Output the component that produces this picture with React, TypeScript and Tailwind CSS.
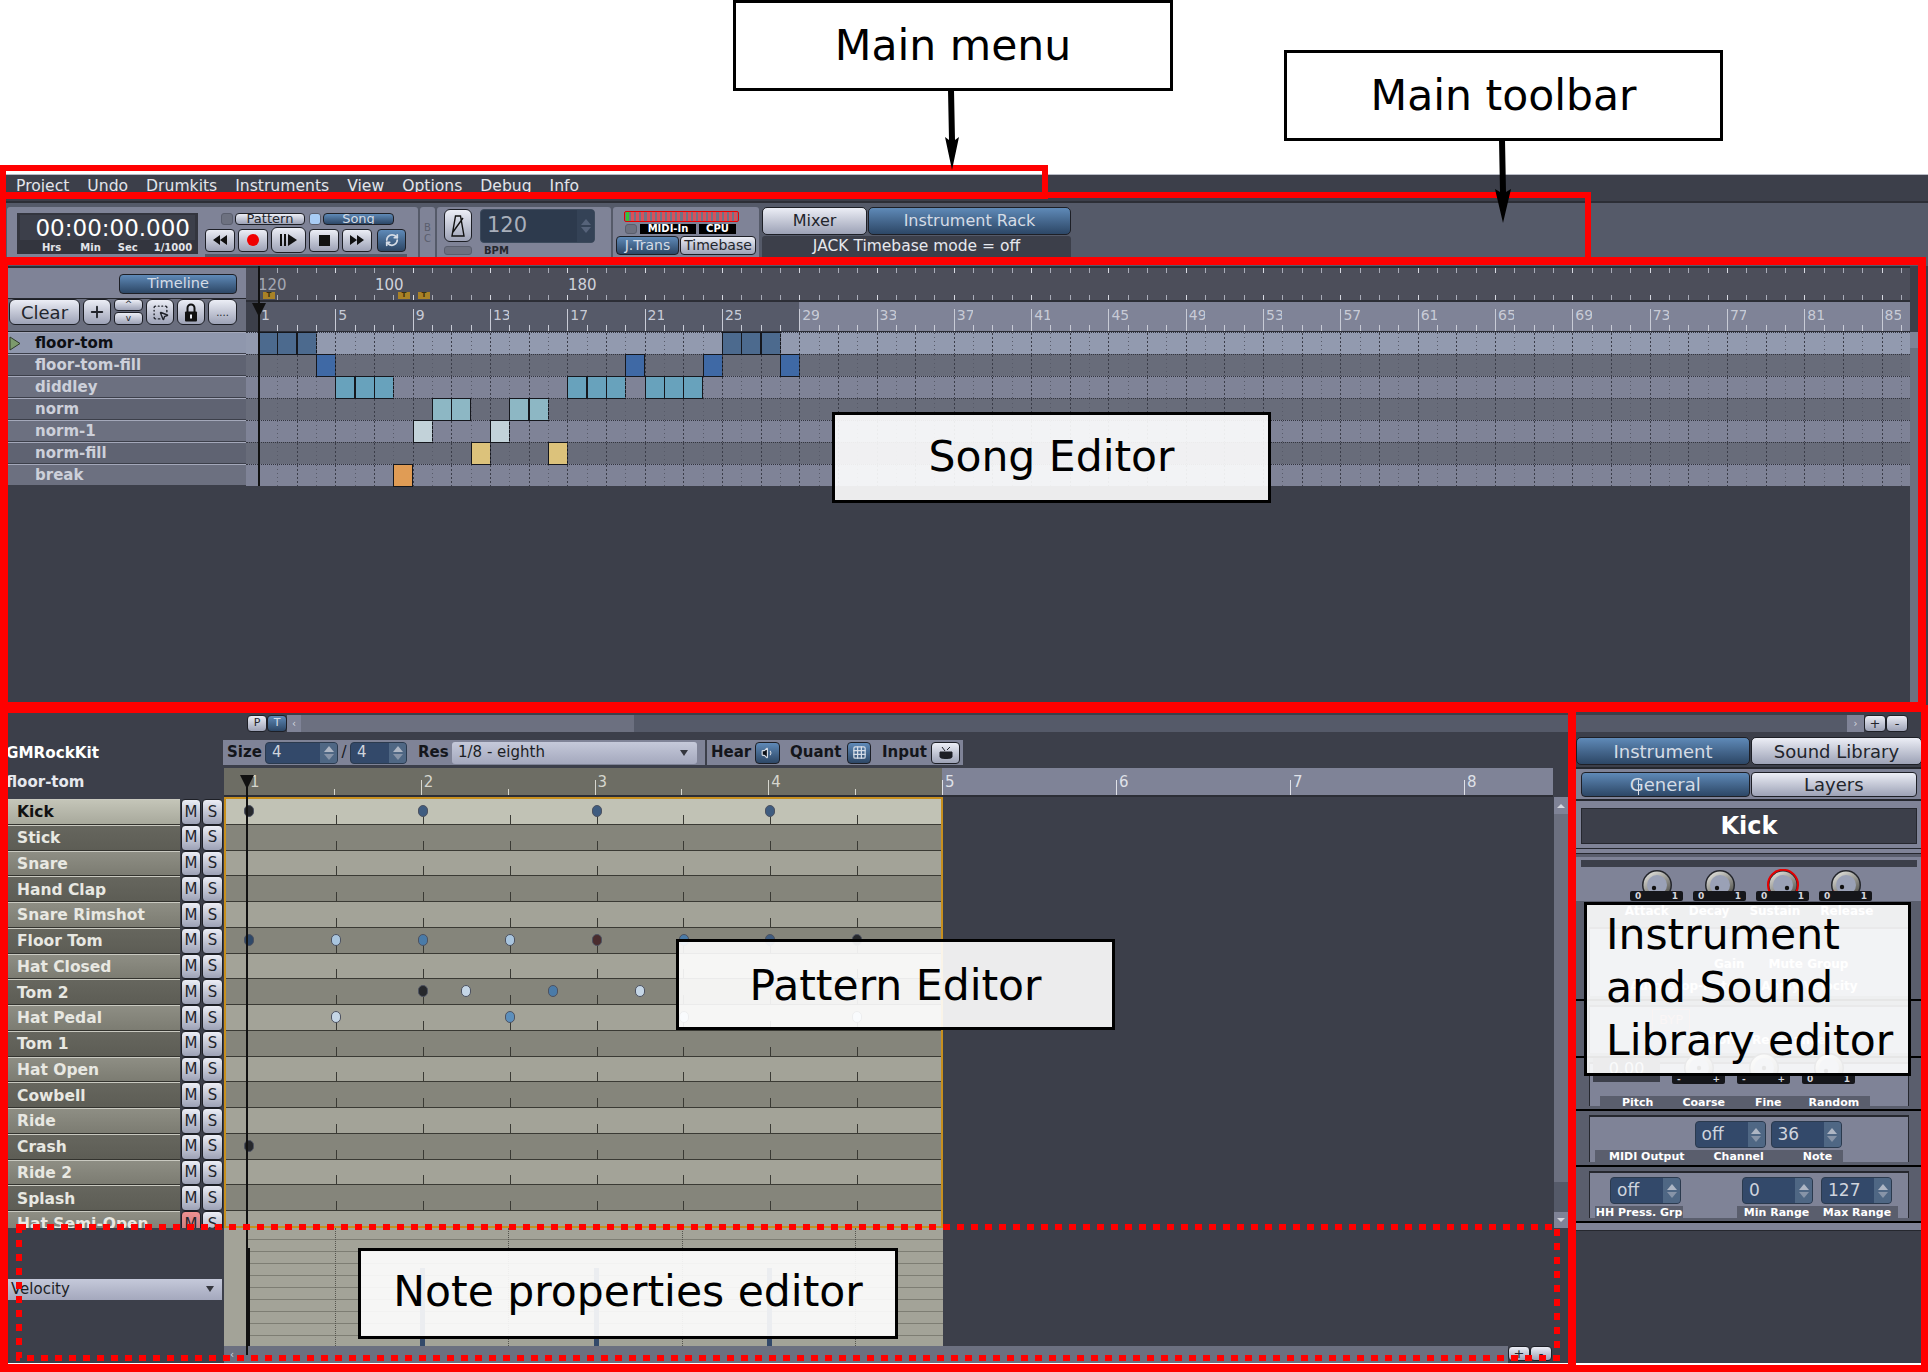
import { Grid3x3, Plus, RefreshCw, SquareDashedMousePointer, Volume1 } from "lucide-react";

const MENU = ["Project", "Undo", "Drumkits", "Instruments", "View", "Options", "Debug", "Info"];

const PATTERNS = ["floor-tom", "floor-tom-fill", "diddley", "norm", "norm-1", "norm-fill", "break"];

const SONG_CELLS: { cols: number[]; color: string }[] = [
  { cols: [0, 1, 2, 24, 25, 26], color: "bg-[#4c6a8e]" },
  { cols: [3, 19, 23, 27], color: "bg-[#3f69a5]" },
  { cols: [4, 5, 6, 16, 17, 18, 20, 21, 22], color: "bg-[#68a2bc]" },
  { cols: [9, 10, 13, 14], color: "bg-[#8db7c4]" },
  { cols: [8, 12], color: "bg-[#c2d2d9]" },
  { cols: [11, 15], color: "bg-[#dcc27b]" },
  { cols: [7], color: "bg-[#e09c55]" },
];

const INSTRUMENTS = [
  "Kick", "Stick", "Snare", "Hand Clap", "Snare Rimshot", "Floor Tom", "Hat Closed", "Tom 2", "Hat Pedal",
  "Tom 1", "Hat Open", "Cowbell", "Ride", "Crash", "Ride 2", "Splash", "Hat Semi-Open",
];

// note positions are px offsets from the left of the pattern grid
const NOTES: Record<string, { x: number; c: string }[]> = {
  Kick: [
    { x: 23, c: "bg-[#26282c]" },
    { x: 197, c: "bg-[#3f5c80]" },
    { x: 371, c: "bg-[#3f5c80]" },
    { x: 544, c: "bg-[#3f5c80]" },
  ],
  "Floor Tom": [
    { x: 23, c: "bg-[#2e4868]" },
    { x: 110, c: "bg-[#a9c5de]" },
    { x: 197, c: "bg-[#4a7ba8]" },
    { x: 284, c: "bg-[#a9c5de]" },
    { x: 371, c: "bg-[#4a2c2e]" },
    { x: 458, c: "bg-[#4a7ba8]" },
    { x: 544, c: "bg-[#3f5c80]" },
    { x: 631, c: "bg-[#26282c]" },
  ],
  "Tom 2": [
    { x: 197, c: "bg-[#26282c]" },
    { x: 240, c: "bg-[#c5d6e6]" },
    { x: 327, c: "bg-[#4a7ba8]" },
    { x: 414, c: "bg-[#c5d6e6]" },
  ],
  "Hat Pedal": [
    { x: 110, c: "bg-[#c5d6e6]" },
    { x: 284, c: "bg-[#5c8fbc]" },
    { x: 458, c: "bg-[#c5d6e6]" },
    { x: 631, c: "bg-[#c5d6e6]" },
  ],
  Crash: [{ x: 23, c: "bg-[#26282c]" }],
};

function SilverBtn({ className = "", children }: { className?: string; children?: React.ReactNode }) {
  return (
    <div
      className={`flex items-center justify-center overflow-hidden rounded-[4px] border border-[#1d1f26] bg-linear-to-b from-[#eceef6] to-[#9da2b6] text-[#22252c] ${className}`}
    >
      {children}
    </div>
  );
}

function BlueBtn({ className = "", children }: { className?: string; children?: React.ReactNode }) {
  return (
    <div
      className={`flex items-center justify-center overflow-hidden rounded-[4px] border border-[#1d1f26] bg-linear-to-b from-[#5f8ab8] to-[#2d4766] text-[#d5dce6] ${className}`}
    >
      {children}
    </div>
  );
}

function Led({ on = false, className = "" }: { on?: boolean; className?: string }) {
  return (
    <div
      className={`rounded-[3px] border border-[#5a5e6d] ${on ? "bg-[#a8ccf5]" : "bg-[#6d7180]"} ${className}`}
    />
  );
}

function Spin({ value, className = "", dark = false }: { value: string; className?: string; dark?: boolean }) {
  return (
    <div
      className={`flex items-stretch overflow-hidden rounded-[4px] border ${dark ? "border-[#3c4a5c] bg-[#2d3a4d]" : "border-[#2b3a4e] bg-[#33496a]"} ${className}`}
    >
      <div className={`flex flex-1 items-center pl-[6px] ${dark ? "text-[#a9afbb]" : "text-[#cfd4dd]"}`}>{value}</div>
      <div className={`flex w-[17px] flex-col items-center justify-center gap-[2px] ${dark ? "bg-[#344256]" : "bg-[#4f6784]"}`}>
        <div className={`h-0 w-0 border-x-[5px] border-b-[6px] border-x-transparent ${dark ? "border-b-[#56637a]" : "border-b-[#aeb6c4]"}`} />
        <div className={`h-0 w-0 border-x-[5px] border-t-[6px] border-x-transparent ${dark ? "border-t-[#56637a]" : "border-t-[#8794a8]"}`} />
      </div>
    </div>
  );
}

function Knob({
  arc,
  lo = "0",
  hi = "1",
  dot = { x: 13, y: 19 },
}: {
  arc?: "full" | "low";
  lo?: string;
  hi?: string;
  dot?: { x: number; y: number };
}) {
  return (
    <div className="relative flex h-[42px] w-[53px] flex-col items-center">
      <svg width="32" height="32" viewBox="0 0 32 32" className="relative">
        <defs>
          <linearGradient id="knobRim" x1="0" y1="0" x2="0.6" y2="1">
            <stop offset="0" stopColor="#efefea" />
            <stop offset="1" stopColor="#55554f" />
          </linearGradient>
        </defs>
        <circle cx="16" cy="16" r="15" fill="#23252b" />
        <circle cx="16" cy="16" r="13.5" fill="url(#knobRim)" />
        <circle cx="16" cy="16" r="10" fill="#9aa1b6" />
        <circle cx={dot.x} cy={dot.y} r="2.2" fill="#111" />
        {arc === "full" ? (
          <path d="M6 27 A15 15 0 1 1 26 27" fill="none" stroke="#e60000" strokeWidth="2" />
        ) : null}
        {arc === "low" ? <path d="M6 27 A15 15 0 0 1 3 22" fill="none" stroke="#e60000" strokeWidth="2.5" /> : null}
      </svg>
      <div className="absolute top-[22px] flex h-[10px] w-[53px] items-center justify-between rounded-[2px] bg-[#15161a] px-[5px] text-[9px] leading-none font-bold text-[#d5d7df]">
        <span>{lo}</span>
        <span>{hi}</span>
      </div>
    </div>
  );
}

function Panel({ className = "", children }: { className?: string; children: React.ReactNode }) {
  return (
    <div className={`border-b-2 border-black bg-[#5a5e6d] px-[13px] pt-[4px] pb-[3px] ${className}`}>
      <div className="relative h-full border-t-2 border-r border-l border-[#25272e] bg-[#7f8397]">{children}</div>
    </div>
  );
}

function Annotation({ className = "", children }: { className?: string; children: React.ReactNode }) {
  return (
    <div
      className={`absolute flex items-center justify-center border-[3px] border-black text-[42.5px] leading-[53px] text-black ${className}`}
    >
      {children}
    </div>
  );
}

function SongRuler() {
  return (
    <div className="flex h-[30px] w-full border-b border-[#2c2e36] pl-[12px]">
      {Array.from({ length: 87 }).map((_, i) => {
        const past = i >= 28;
        return (
          <div key={i} className={`relative h-full w-[19.33px] shrink-0 ${past ? "bg-[#7f8397]" : "bg-[#565a69]"}`}>
            {i % 4 === 0 ? (
              <>
                <div className="absolute top-[7px] bottom-0 left-0 w-px bg-[#c8cbd6]" />
                <span className="absolute top-[5px] left-[3px] text-[14px] leading-[16px] text-[#c8cbd6]">{i + 1}</span>
              </>
            ) : (
              <div className="absolute bottom-0 left-0 h-[6px] w-px bg-[#c8cbd6]" />
            )}
          </div>
        );
      })}
    </div>
  );
}

function TimelineRuler() {
  return (
    <div className="relative flex h-[36px] w-full flex-col justify-between border-y-2 border-[#2c2e36] bg-[#4c4e5a] pl-[12px]">
      {[0, 1].map((r) => (
        <div key={r} className={`flex ${r === 0 ? "h-[6px] items-start" : "h-[6px] items-end"}`}>
          {Array.from({ length: 86 }).map((_, i) => (
            <div key={i} className="w-[19.33px] shrink-0">
              <div className={`h-[5px] w-px ${i % 4 === 0 ? "bg-[#d8dae2]" : "bg-[#a9acb8]"}`} />
            </div>
          ))}
        </div>
      ))}
      <span className="absolute top-[8px] left-[12px] text-[15px] leading-[18px] text-[#a4a7b2]">120</span>
      <span className="absolute top-[8px] left-[129px] text-[15px] leading-[18px] text-[#d0d2da]">100</span>
      <span className="absolute top-[8px] left-[322px] text-[15px] leading-[18px] text-[#d0d2da]">180</span>
      {[17, 152, 172].map((x) => (
        <span
          key={x}
          style={{ left: x }}
          className="absolute top-[24px] h-[7px] w-[12px] bg-[#a98227] text-center text-[7px] leading-[7px] font-bold text-[#3a3010]"
        >
          T
        </span>
      ))}
    </div>
  );
}

function SongRow({ row }: { row: number }) {
  const selected = row === 0;
  const odd = row % 2 === 1;
  const bg = selected ? "bg-[#929aaf]" : odd ? "bg-[#686c7a]" : "bg-[#7f8397]";
  const cells = SONG_CELLS[row];
  return (
    <div className={`flex h-[22px] w-full items-stretch border-t border-dotted border-[#33353f] pl-[12px] ${bg}`}>
      {Array.from({ length: 86 }).map((_, i) => {
        const filled = cells.cols.includes(i);
        return (
          <div key={i} className="relative h-full w-[19.33px] shrink-0">
            <div
              className={`h-full w-px ${
                i % 2 === 0
                  ? "bg-[repeating-linear-gradient(to_bottom,#3a3c48_0,#3a3c48_2px,transparent_2px,transparent_4px)]"
                  : "bg-[repeating-linear-gradient(to_bottom,#575a68_0,#575a68_1px,transparent_1px,transparent_4px)]"
              }`}
            />
            {filled ? (
              <div className={`absolute -top-px left-0 h-[23px] w-[20px] border border-[#15171d] ${cells.color}`} />
            ) : null}
          </div>
        );
      })}
    </div>
  );
}

function PatternRow({ name, row }: { name: string; row: number }) {
  const bg = row === 0 ? "bg-[#c1c2b5]" : row % 2 === 1 ? "bg-[#85857b]" : "bg-[#a3a398]";
  return (
    <div className={`relative flex h-[25.75px] shrink-0 items-end border-b border-[#3a3a34] pl-[23px] ${bg}`}>
      {Array.from({ length: 8 }).map((_, i) => (
        <div key={i} className="h-[9px] w-[86.9px] shrink-0 border-l border-[#3a3a34] first:border-l-0" />
      ))}
      {(NOTES[name] ?? []).map((n) => (
        <div
          key={n.x}
          style={{ left: n.x - 5 }}
          className={`absolute top-[6px] h-[12px] w-[10px] rounded-full border border-[#4d5260] ${n.c}`}
        />
      ))}
    </div>
  );
}

function InstrumentLabel({ name, row }: { name: string; row: number }) {
  const bg =
    row === 0
      ? "from-[#c4c5b8] to-[#a8a99c] text-[#111]"
      : row % 2 === 1
        ? "from-[#66665e] to-[#5d5d55] text-[#e8e8e2]"
        : "from-[#8e8e84] to-[#7c7c72] text-[#e8e8e2]";
  const muted = name === "Hat Semi-Open";
  return (
    <div className="flex h-[25.75px] shrink-0 items-stretch gap-px">
      <div
        className={`flex w-[172px] items-center overflow-hidden border-t border-[#c9c9c0] border-b border-b-[#33332e] bg-linear-to-b pt-[2px] pl-[9px] text-[15.5px] font-bold ${bg}`}
      >
        {name}
      </div>
      <SilverBtn className={`w-[20px] text-[15px] ${muted ? "from-[#f09090] to-[#b57a82]" : ""}`}>M</SilverBtn>
      <SilverBtn className="w-[21px] text-[15px]">S</SilverBtn>
    </div>
  );
}

function PatternRuler() {
  return (
    <div className="flex h-[29px] flex-1">
      <div className="flex w-[718px] border-b-2 border-[#2c2e36] bg-[#6d6d64] pl-[23px]">
        {Array.from({ length: 8 }).map((_, i) => (
          <div key={i} className="relative h-full w-[86.9px] shrink-0">
            {i % 2 === 0 ? (
              <>
                <div className="absolute top-[12px] bottom-0 left-0 w-px bg-[#d6d6ce]" />
                <span className="absolute top-[5px] left-[3px] text-[15px] leading-[18px] text-[#d6d6ce]">{i / 2 + 1}</span>
              </>
            ) : (
              <div className="absolute bottom-0 left-0 h-[6px] w-px bg-[#d6d6ce]" />
            )}
          </div>
        ))}
      </div>
      <div className="flex w-[611px] border-b-2 border-[#2c2e36] bg-[#7f8397]">
        {Array.from({ length: 7 }).map((_, i) => (
          <div key={i} className="relative h-full w-[87px] shrink-0">
            {i % 2 === 0 ? (
              <>
                <div className="absolute top-[12px] bottom-0 left-0 w-px bg-[#dfe1e8]" />
                <span className="absolute top-[5px] left-[3px] text-[15px] leading-[18px] text-[#dfe1e8]">
                  {Math.floor(i / 2) + 5}
                </span>
              </>
            ) : null}
          </div>
        ))}
        <div className="relative h-full flex-1">
          <div className="absolute top-[12px] bottom-0 left-[87px] w-px bg-[#dfe1e8]" />
        </div>
      </div>
    </div>
  );
}

function Toolbar() {
  return (
    <div className="flex h-[65px] items-start gap-[2px] border-t-2 border-[#2c2e36] bg-[#555a69] pt-[4px] pl-[7px] text-[#22252c]">
      {/* time + transport */}
      <div className="flex h-[51px] w-[411px] rounded-t-[3px] bg-[#7f8397] pt-[6px] pl-[10px]">
        <div className="flex h-[41px] w-[181px] flex-col bg-[#33353e] px-[3px] pt-[2px]">
          <div className="h-[25px] bg-[#3c3f4a] pr-[5px] text-right text-[23px] leading-[26px] text-white">00:00:00.000</div>
          <div className="flex h-[14px] items-center text-[10px] font-bold text-[#e3e5ea]">
            <span className="ml-[22px]">Hrs</span>
            <span className="ml-[19px]">Min</span>
            <span className="ml-[17px]">Sec</span>
            <span className="ml-[16px]">1/1000</span>
          </div>
        </div>
        <div className="ml-[7px] flex w-[202px] flex-col">
          <div className="flex h-[12px] items-center gap-[2px] pl-[16px]">
            <Led className="h-[12px] w-[12px]" />
            <SilverBtn className="h-[12px] w-[70px] rounded-[2px] text-[13px]">Pattern</SilverBtn>
            <Led on className="ml-[2px] h-[12px] w-[12px]" />
            <BlueBtn className="h-[12px] w-[71px] rounded-[2px] text-[13px]">Song</BlueBtn>
          </div>
          <div className="mt-[2px] flex h-[26px] items-center gap-[3px]">
            <SilverBtn className="h-[23px] w-[30px]">
              <svg width="16" height="10" viewBox="0 0 16 10"><path d="M8 0v10L1 5zM15 0v10L8 5z" fill="#111" /></svg>
            </SilverBtn>
            <SilverBtn className="h-[23px] w-[30px]">
              <div className="h-[12px] w-[12px] rounded-full bg-[#f00000]" />
            </SilverBtn>
            <SilverBtn className="h-[26px] w-[35px] rounded-[6px]">
              <svg width="20" height="12" viewBox="0 0 20 12"><path d="M1 0h2v12H1zM5 0h2v12H5zM9 0l9 6-9 6z" fill="#111" /></svg>
            </SilverBtn>
            <SilverBtn className="h-[23px] w-[30px]">
              <div className="h-[11px] w-[11px] bg-[#111]" />
            </SilverBtn>
            <SilverBtn className="h-[23px] w-[30px]">
              <svg width="16" height="10" viewBox="0 0 16 10"><path d="M1 0v10l7-5zM8 0v10l7-5z" fill="#111" /></svg>
            </SilverBtn>
            <BlueBtn className="ml-[2px] h-[23px] w-[29px] text-[#10141a]">
              <RefreshCw size={14} strokeWidth={3} />
            </BlueBtn>
          </div>
          <div className="mt-[1px] h-[6px] bg-[#555a69]" />
        </div>
      </div>
      {/* beat counter handle */}
      <div className="flex h-[51px] w-[15px] flex-col items-center justify-center rounded-t-[3px] bg-[#7f8397] text-[10px] leading-[11px] text-[#5a5e6d]">
        <span>B</span>
        <span>C</span>
      </div>
      {/* bpm */}
      <div className="flex h-[51px] w-[174px] rounded-t-[3px] bg-[#7f8397] pt-[2px] pl-[7px]">
        <div className="flex w-[28px] flex-col gap-[4px]">
          <SilverBtn className="h-[33px] rounded-[6px]">
            <svg width="16" height="24" viewBox="0 0 16 24" fill="none" stroke="#111" strokeWidth="1.4">
              <path d="M5.5 2h5L14 22H2zM3 18L13 4" />
            </svg>
          </SilverBtn>
          <Led className="h-[9px]" />
        </div>
        <div className="ml-[8px] flex flex-col">
          <Spin dark value="120" className="h-[34px] w-[115px] text-[21px]" />
          <div className="mt-[2px] ml-[4px] text-[10px] leading-[12px] font-bold text-[#25272e]">BPM</div>
        </div>
      </div>
      {/* meters */}
      <div className="flex h-[51px] w-[146px] flex-col rounded-t-[3px] bg-[#7f8397] pt-[4px] pl-[3px]">
        <div className="ml-[8px] flex h-[11px] w-[115px] items-center justify-between rounded-[2px] border border-[#e60000] bg-[#6f7386] px-px">
          {Array.from({ length: 22 }).map((_, i) => (
            <div key={i} className={`h-full w-[3px] ${i === 0 ? "bg-[#35c435]" : "bg-[#d8505a]"}`} />
          ))}
        </div>
        <div className="mt-[2px] ml-[9px] flex h-[10px] items-center gap-[3px] text-[10px] font-bold text-white">
          <Led className="h-[10px] w-[12px]" />
          <div className="flex h-[10px] w-[56px] items-center justify-center bg-black leading-none">MIDI-In</div>
          <div className="flex h-[10px] w-[37px] items-center justify-center bg-black leading-none">CPU</div>
        </div>
        <div className="mt-[2px] flex h-[19px] gap-px text-[14px]">
          <BlueBtn className="w-[63px]">J.Trans</BlueBtn>
          <SilverBtn className="w-[76px]">Timebase</SilverBtn>
        </div>
      </div>
      {/* mixer + rack */}
      <div className="ml-[1px] flex w-[309px] flex-col gap-[1px]">
        <div className="flex h-[28px] gap-[1px] text-[16px]">
          <SilverBtn className="w-[105px] rounded-[5px]">Mixer</SilverBtn>
          <BlueBtn className="flex-1 rounded-[5px]">Instrument Rack</BlueBtn>
        </div>
        <div className="flex h-[22px] items-center justify-center rounded-t-[3px] bg-[#3c3f4a] text-[15.5px] text-[#e6e8ee]">
          JACK Timebase mode = off
        </div>
      </div>
    </div>
  );
}

function SongEditor() {
  return (
    <div className="flex h-[441px] bg-[#3c3f4a]">
      <div className="w-[246px] shrink-0">
        <div className="flex h-[32px] justify-end border-t-2 border-[#2c2e36] bg-[#7f8397] pt-[6px] pr-[9px]">
          <BlueBtn className="h-[20px] w-[118px] text-[14.5px]">Timeline</BlueBtn>
        </div>
        <div className="flex h-[34px] items-start gap-[3px] border-y border-[#25272e] bg-[#6a6e7e] pl-[9px]">
          <SilverBtn className="h-[26px] w-[71px] rounded-[6px] text-[18px]">Clear</SilverBtn>
          <SilverBtn className="h-[26px] w-[28px] rounded-[6px]">
            <Plus size={18} strokeWidth={2.5} />
          </SilverBtn>
          <div className="flex h-[26px] w-[29px] flex-col gap-[1px]">
            <SilverBtn className="h-[12px] rounded-[2px] text-[9px]">^</SilverBtn>
            <SilverBtn className="h-[13px] rounded-[2px] text-[9px]">v</SilverBtn>
          </div>
          <SilverBtn className="h-[26px] w-[28px] rounded-[6px]">
            <SquareDashedMousePointer size={17} />
          </SilverBtn>
          <SilverBtn className="h-[26px] w-[28px] rounded-[6px]">
            <svg width="14" height="19" viewBox="0 0 14 19">
              <path d="M3.5 9V5a3.5 3.5 0 0 1 7 0v4" fill="none" stroke="#111" strokeWidth="2" />
              <rect x="1" y="8.5" width="12" height="10" rx="1" fill="#111" />
              <rect x="6" y="11.5" width="2" height="4" fill="#eceef6" />
            </svg>
          </SilverBtn>
          <SilverBtn className="h-[26px] w-[29px] rounded-[6px] from-[#a4a8ba] to-[#8a8ea2] text-[10px] text-[#6a6e7e]">
            ....
          </SilverBtn>
        </div>
        {PATTERNS.map((name, i) => (
          <div
            key={name}
            className={`relative flex h-[22px] items-center border-t border-b border-t-[#a4a8ba] border-b-[#3c3f4a] pl-[35px] text-[15px] font-bold ${
              i === 0 ? "bg-[#8f97ad] text-[#0d0f14]" : i % 2 === 1 ? "bg-[#5f6372] text-[#cdd0da]" : "bg-[#6c7080] text-[#cdd0da]"
            }`}
          >
            {i === 0 ? (
              <svg className="absolute top-[3px] left-[9px]" width="12" height="15" viewBox="0 0 12 15">
                <path d="M1 1l10 6.5L1 14z" fill="#7c9a6c" stroke="#2f3a2a" />
              </svg>
            ) : null}
            {name}
          </div>
        ))}
      </div>
      <div className="relative w-[1664px] shrink-0 overflow-hidden">
        <TimelineRuler />
        <SongRuler />
        {PATTERNS.map((name, i) => (
          <SongRow key={name} row={i} />
        ))}
        {/* playhead */}
        <div className="absolute top-0 left-[12px] h-[220px] w-[2px] bg-[#111]" />
        <div className="absolute top-[37px] left-[6px] h-0 w-0 border-x-[7px] border-t-[14px] border-x-transparent border-t-[#111]" />
      </div>
      <div className="mt-[66px] flex h-[370px] w-[8px] shrink-0 flex-col bg-[#6c7080]">
        <div className="h-[16px] bg-[#7f8397]" />
      </div>
    </div>
  );
}

function PatternHeader() {
  return (
    <div className="flex h-[35px] items-end bg-[#3c3f4a] pb-[3px] text-[15px]">
      <div className="w-[223px] self-center pt-[8px] pl-[6px] text-[15.2px] font-bold text-white">GMRockKit</div>
      <div className="flex h-[25px] w-[482px] items-center bg-[#7f8397] pl-[4px] text-[#14161b]">
        <span className="w-[38px] font-bold">Size</span>
        <Spin value="4" className="h-[22px] w-[73px] text-[#d5dce6]" />
        <span className="w-[12px] text-center">/</span>
        <Spin value="4" className="h-[22px] w-[57px]" />
        <span className="ml-[11px] w-[34px] font-bold">Res</span>
        <div className="flex h-[22px] w-[245px] items-center justify-between rounded-[3px] bg-linear-to-b from-[#c5c9da] to-[#a4a8bd] px-[6px] text-[#1c1e24]">
          <span>1/8 - eighth</span>
          <div className="mr-[3px] h-0 w-0 border-x-[4px] border-t-[6px] border-x-transparent border-t-[#34363e]" />
        </div>
      </div>
      <div className="ml-[2px] flex h-[25px] w-[256px] items-center bg-[#7f8397] pl-[4px] font-bold text-[#14161b]">
        <span className="w-[44px]">Hear</span>
        <BlueBtn className="h-[22px] w-[25px] text-[#0d1118]">
          <Volume1 size={14} fill="#0d1118" />
        </BlueBtn>
        <span className="ml-[10px] w-[57px]">Quant</span>
        <BlueBtn className="h-[22px] w-[24px] text-[#0d1118]">
          <Grid3x3 size={15} />
        </BlueBtn>
        <span className="ml-[11px] w-[49px]">Input</span>
        <SilverBtn className="h-[22px] w-[29px]">
          <svg width="14" height="14" viewBox="0 0 14 14" fill="#1d1f26">
            <path d="M1 6h12v5c0 2-12 2-12 0zM3 1l3 4M11 1L8 4" stroke="#1d1f26" />
          </svg>
        </SilverBtn>
      </div>
    </div>
  );
}

function PatternEditor() {
  return (
    <div className="w-[1570px] shrink-0">
      <PatternHeader />
      <div className="flex">
        <div className="w-[224px] shrink-0 pt-[3px] pl-[6px] text-[15px] font-bold text-[#e6e8ee]">floor-tom</div>
        <PatternRuler />
      </div>
      <div className="flex h-[431px] overflow-hidden">
        <div className="flex w-[224px] shrink-0 flex-col overflow-hidden pt-[2px] pl-[8px]">
          {INSTRUMENTS.map((name, i) => (
            <InstrumentLabel key={name} name={name} row={i} />
          ))}
        </div>
        <div className="flex w-[719px] shrink-0 flex-col overflow-hidden border-2 border-[#c8901e]">
          {INSTRUMENTS.map((name, i) => (
            <PatternRow key={name} name={name} row={i} />
          ))}
        </div>
        <div className="w-[611px] shrink-0" />
        <div className="flex w-[14px] shrink-0 flex-col bg-[#6c7080]">
          <div className="flex h-[17px] items-center justify-center bg-[#7f8397]">
            <div className="h-0 w-0 border-x-[4px] border-b-[4px] border-x-transparent border-b-[#d5d7df]" />
          </div>
          <div className="flex-1" />
          <div className="h-[30px] bg-[#555a69]" />
          <div className="flex h-[16px] items-center justify-center bg-[#7f8397]">
            <div className="h-0 w-0 border-x-[4px] border-t-[4px] border-x-transparent border-t-[#d5d7df]" />
          </div>
        </div>
      </div>
      <div className="flex h-[118px]">
        <div className="flex w-[224px] shrink-0 items-center pt-[4px] pl-[8px]">
          <div className="flex h-[21px] w-[214px] items-center justify-between bg-linear-to-b from-[#c5c9da] to-[#a4a8bd] pl-[3px] pr-[8px] text-[15px] text-[#1c1e24]">
            <span>Velocity</span>
            <div className="h-0 w-0 border-x-[4px] border-t-[6px] border-x-transparent border-t-[#34363e]" />
          </div>
        </div>
        <div className="relative w-[719px] shrink-0 bg-[#a3a398] pl-[23px]">
          <div className="h-full bg-[repeating-linear-gradient(to_bottom,#a3a398_0,#a3a398_11px,#7d7d73_11px,#7d7d73_12px)]" />
          {[111, 284, 458, 631].map((x) => (
            <div key={x} style={{ left: x }} className="absolute top-0 bottom-0 w-px border-l border-dotted border-[#55554e]" />
          ))}
          <div className="absolute top-[20px] bottom-0 left-[22px] w-[4px] bg-[#111]" />
          <div className="absolute top-[40px] bottom-0 left-[196px] w-[5px] bg-[#33496a]" />
          <div className="absolute top-[40px] bottom-0 left-[370px] w-[5px] bg-[#33496a]" />
          <div className="absolute top-[40px] bottom-0 left-[543px] w-[5px] bg-[#33496a]" />
        </div>
      </div>
      <div className="flex h-[17px] pl-[224px]">
        <div className="flex w-[16px] items-center justify-center bg-[#6c7080] text-[10px] text-[#d5d7df]">‹</div>
        <div className="flex-1 bg-[#6c7080]" />
        <SilverBtn className="h-[15px] w-[22px] rounded-[2px] text-[13px]">+</SilverBtn>
        <SilverBtn className="mr-[18px] h-[15px] w-[22px] rounded-[2px] text-[13px]">-</SilverBtn>
      </div>
    </div>
  );
}

function RightPanel() {
  return (
    <div className="ml-[6px] flex w-[346px] shrink-0 flex-col pt-[4px] text-[18px]">
      <div className="flex h-[28px] gap-[1px]">
        <BlueBtn className="w-[174px] rounded-[5px]">Instrument</BlueBtn>
        <SilverBtn className="w-[171px] rounded-[5px]">Sound Library</SilverBtn>
      </div>
      <div className="mt-[2px] flex h-[32px] gap-[1px] border-t-2 border-[#25272e] bg-[#7f8397] px-[5px] pt-[3px]">
        <BlueBtn className="h-[25px] w-[169px] rounded-[4px]">General</BlueBtn>
        <SilverBtn className="h-[25px] w-[167px] rounded-[4px]">Layers</SilverBtn>
      </div>
      <div className="h-[49px] border-t-2 border-[#25272e] bg-[#7f8397] px-[5px] pt-[7px]">
        <div className="flex h-[36px] items-center justify-center border border-[#25272e] bg-[#3c3f4a] text-[24px] font-bold text-white">
          Kick
        </div>
      </div>
      <div className="h-[6px] border-y border-[#25272e] bg-[#7f8397]" />
      <div className="h-[69px] bg-[#5a5e6d] pt-[3px]">
        <div className="h-[44px] bg-[#7f8397] px-[5px] pt-[3px]">
          <div className="h-[7px] bg-[#3c3f4a]" />
          <div className="mt-[2px] flex justify-center gap-[10px] pl-[4px]">
            <Knob />
            <Knob />
            <Knob arc="full" dot={{ x: 20, y: 19 }} />
            <Knob arc="low" dot={{ x: 12, y: 18 }} />
          </div>
        </div>
        <div className="mt-[3px] flex justify-center gap-[20px] text-[12px] leading-[14px] font-bold text-white">
          <span>Attack</span>
          <span>Decay</span>
          <span>Sustain</span>
          <span>Release</span>
        </div>
      </div>
      <Panel className="h-[78px]">
        <div className="flex gap-[24px] pt-[28px] pl-[124px] text-[12px] leading-[14px] font-bold text-white">
          <span>Gain</span>
          <span>Mute Group</span>
        </div>
        <div className="mt-[8px] flex gap-[26px] pl-[40px] text-[12px] leading-[14px] font-bold text-white">
          <span>Auto-Stop-Note</span>
          <span>Apply Velocity</span>
        </div>
      </Panel>
      <Panel className="h-[57px]">
        <div className="flex items-center gap-[12px] pt-[2px] pl-[62px] text-[13px] text-[#c9a0a0]">
          <span className="border border-[#b88] px-[6px]">BYP</span>
        </div>
        <div className="absolute top-[26px] left-[105px] flex gap-[16px] text-[12px] leading-[14px] font-bold text-white">
          <span>Cutoff</span>
          <span>Resonance</span>
        </div>
      </Panel>
      <Panel className="h-[53px]">
        <div className="flex items-start pl-[3px]">
          <div className="mt-[-6px] h-[24px] w-[67px] bg-[#3c3f4a] text-center text-[16px] leading-[22px] text-[#cfd4dd]">0.00</div>
          <div className="ml-[12px] mt-[-12px] flex gap-[12px]">
            <Knob lo="-" hi="+" dot={{ x: 16, y: 16 }} />
            <Knob lo="-" hi="+" dot={{ x: 16, y: 16 }} />
            <Knob />
          </div>
        </div>
        <div className="absolute top-[32px] left-[10px] flex h-[12px] w-[270px] items-center bg-[#5a5e6d] text-[11px] leading-none font-bold text-white">
          <span className="ml-[22px]">Pitch</span>
          <span className="ml-[29px]">Coarse</span>
          <span className="ml-[30px]">Fine</span>
          <span className="ml-[27px]">Random</span>
        </div>
      </Panel>
      <Panel className="h-[56px]">
        <div className="flex justify-center gap-[5px] pt-[4px] pl-[38px] text-[17px]">
          <Spin value="off" className="h-[27px] w-[71px]" />
          <Spin value="36" className="h-[27px] w-[71px]" />
        </div>
        <div className="mt-[2px] ml-[5px] flex h-[12px] w-[248px] items-center bg-[#5a5e6d] text-[11px] leading-none font-bold text-white">
          <span className="ml-[14px]">MIDI Output</span>
          <span className="ml-[29px]">Channel</span>
          <span className="ml-[39px]">Note</span>
        </div>
      </Panel>
      <Panel className="h-[56px]">
        <div className="flex pt-[4px] pl-[20px] text-[17px]">
          <Spin value="off" className="h-[27px] w-[71px]" />
          <Spin value="0" className="ml-[61px] h-[27px] w-[71px]" />
          <Spin value="127" className="ml-[8px] h-[27px] w-[71px]" />
        </div>
        <div className="mt-[2px] flex pl-[5px] text-[11px] leading-none font-bold text-white">
          <div className="flex h-[12px] w-[88px] items-center justify-center bg-[#5a5e6d]">HH Press. Grp</div>
          <div className="ml-[54px] flex h-[12px] w-[161px] items-center justify-around bg-[#5a5e6d]">
            <span>Min Range</span>
            <span>Max Range</span>
          </div>
        </div>
      </Panel>
      <div className="h-[8px] border-b border-[#25272e] bg-[#7f8397]" />
    </div>
  );
}

export default function App() {
  return (
    <div className="relative h-[1372px] w-[1928px] overflow-hidden bg-white font-['DejaVu_Sans','Liberation_Sans',sans-serif]">
      <div className="h-[174px]" />
      <div className="flex h-[27px] items-center gap-[18px] border-t border-[#b9bcc6] bg-[#3c3f4a] pb-[3px] pl-[16px] text-[15.6px] text-[#e3e5ea]">
        {MENU.map((m) => (
          <span key={m}>{m}</span>
        ))}
      </div>
      <Toolbar />
      <SongEditor />

      {/* lower half */}
      <div className="bg-[#3c3f4a]">
        <div className="flex h-[26px] bg-[#3c3f4a] pt-[8px] pl-[247px]">
          <SilverBtn className="h-[17px] w-[20px] rounded-[3px] text-[11px]">P</SilverBtn>
          <BlueBtn className="h-[17px] w-[20px] rounded-[3px] text-[11px]">T</BlueBtn>
          <div className="flex h-[17px] w-[14px] items-center justify-center bg-[#7f8397] text-[10px] text-[#d5d7df]">‹</div>
          <div className="h-[17px] w-[333px] bg-[#6c7080]" />
          <div className="h-[17px] w-[1213px] bg-[#555a69]" />
          <div className="flex h-[17px] w-[17px] items-center justify-center bg-[#7f8397] text-[10px] text-[#d5d7df]">›</div>
          <SilverBtn className="h-[17px] w-[22px] rounded-[3px] text-[13px]">+</SilverBtn>
          <SilverBtn className="h-[17px] w-[22px] rounded-[3px] text-[13px]">-</SilverBtn>
        </div>
        <div className="relative flex">
          <PatternEditor />
          <RightPanel />
          {/* playhead */}
          <div className="absolute top-[42px] left-[246px] h-[580px] w-[2px] bg-[#111]" />
          <div className="absolute top-[42px] left-[240px] h-0 w-0 border-x-[7px] border-t-[14px] border-x-transparent border-t-[#111]" />
        </div>
      </div>

      {/* annotations drawn on top of the screenshot */}
      <div className="absolute top-[165px] left-0 h-[34px] w-[1048px] border-[6px] border-[#ff0000]" />
      <div className="absolute top-[192px] left-0 h-[72px] w-[1591px] border-[6px] border-[#ff0000]" />
      <div className="absolute top-[257px] left-0 h-[453px] w-[1926px] border-[8px] border-[#ff0000]" />
      <div className="absolute top-[705px] left-0 h-[667px] w-[1576px] border-[8px] border-[#ff0000]" />
      <div className="absolute top-[705px] left-[1569px] h-[667px] w-[359px] border-[7px] border-[#ff0000]" />

      <svg className="absolute top-[1224px] left-[16px]" width="1544" height="140">
        <rect x="3" y="3" width="1538" height="131" fill="none" stroke="#ff0000" strokeWidth="6" strokeDasharray="7 7" />
      </svg>

      <svg className="absolute top-0 left-0" width="1928" height="240">
        <path d="M948 90h6l1 50 4-3-7 33-7-33 4 3z" fill="#000" />
        <path d="M1499 140h6l1 52 5-3-8 34-8-34 5 3z" fill="#000" />
      </svg>

      <Annotation className="top-0 left-[733px] h-[91px] w-[440px] bg-white">Main menu</Annotation>
      <Annotation className="top-[50px] left-[1284px] h-[91px] w-[439px] bg-white">Main toolbar</Annotation>
      <Annotation className="top-[412px] left-[832px] h-[91px] w-[439px] bg-white/90 pb-[3px]">Song Editor</Annotation>
      <Annotation className="top-[939px] left-[676px] h-[91px] w-[439px] bg-white/90 pt-[1px]">Pattern Editor</Annotation>
      <Annotation className="top-[1248px] left-[358px] h-[91px] w-[540px] bg-white/90 pb-[5px]">Note properties editor</Annotation>
      <Annotation className="top-[902px] left-[1584px] h-[174px] w-[327px] justify-start bg-white/90 pb-[4px] pl-[19px]">
        <div>
          Instrument
          <br />
          and Sound
          <br />
          Library editor
        </div>
      </Annotation>
    </div>
  );
}
